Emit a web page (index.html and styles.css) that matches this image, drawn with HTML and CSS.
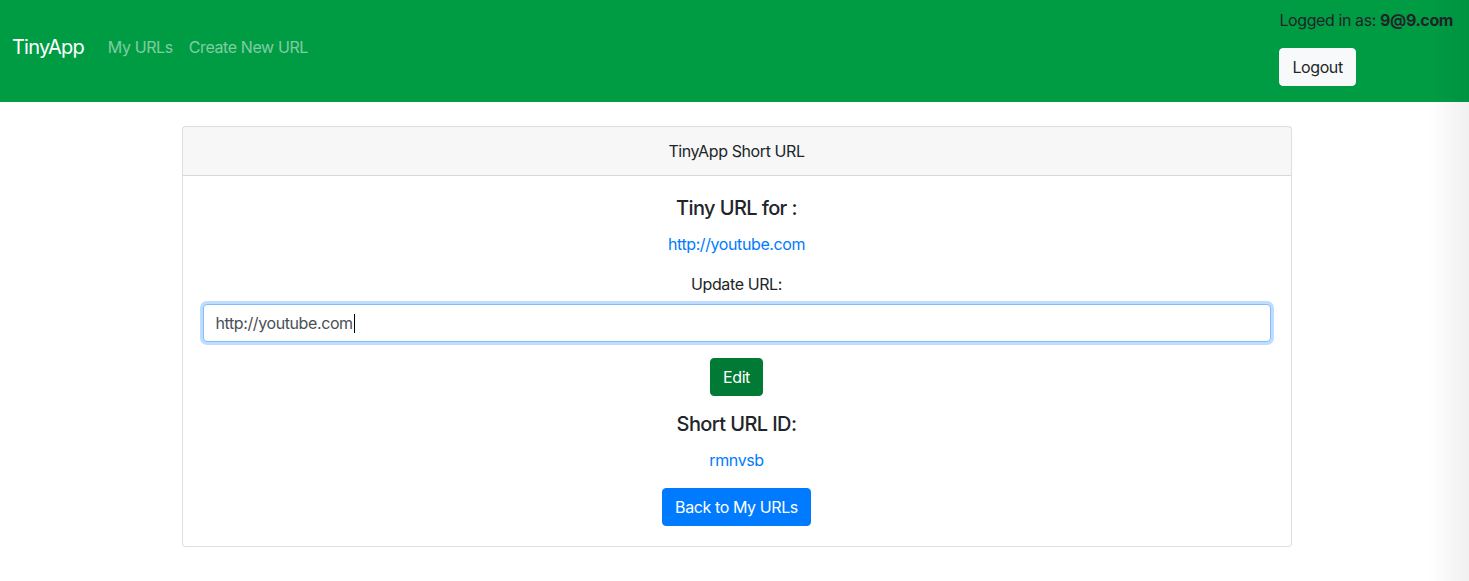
FILE: index.html
```html
<!DOCTYPE html>
<html lang="en">
<head>
<meta charset="utf-8">
<title>TinyApp</title>
<link rel="stylesheet" href="styles.css">
</head>
<body>
<nav class="navbar">
  <a class="brand" href="#">TinyApp</a>
  <ul class="nav-links">
    <li><a class="nav-link" href="#">My URLs</a></li>
    <li><a class="nav-link" href="#">Create New URL</a></li>
  </ul>
  <div class="user-box">
    <div class="user-line">Logged in as: <b>9@9.com</b></div>
    <button class="btn btn-light">Logout</button>
  </div>
</nav>
<main class="container">
  <section class="card">
    <header class="card-header">TinyApp Short URL</header>
    <div class="card-body">
      <h5 class="title">Tiny URL for :</h5>
      <a class="link long-link" href="#">http://youtube.com</a>
      <form class="edit-form">
        <label class="label" for="longURL">Update URL:</label>
        <div class="input"><span>http://youtube.com</span><span class="caret"></span></div>
        <button class="btn btn-edit" type="button">Edit</button>
      </form>
      <h5 class="title">Short URL ID:</h5>
      <a class="link short-link" href="#">rmnvsb</a>
      <a class="btn btn-primary" href="#">Back to My URLs</a>
    </div>
  </section>
</main>
<div class="edge-shadow"></div>
</body>
</html>
```
FILE: styles.css
```css
* { box-sizing: border-box; }
html, body { margin: 0; padding: 0; }
body {
  font-family: Inter, "Noto Sans", "Liberation Sans", sans-serif;
  font-size: 16px;
  line-height: 24px;
  letter-spacing: -0.4px;
  color: #212529;
  background: #fff;
}
a { text-decoration: none; }

.navbar {
  display: flex;
  align-items: flex-start;
  background: #009c44;
  padding: 8px 16px 16px 12px;
  height: 102px;
}
.brand {
  color: #fff;
  font-size: 20px;
  line-height: 30px;
  letter-spacing: -0.8px;
  margin-top: 24px;
  margin-right: 16px;
}
.nav-links {
  display: flex;
  list-style: none;
  margin: 24px 0 0 0;
  padding: 0;
  flex: 1;
}
.nav-link {
  display: block;
  padding: 3px 8px;
  color: rgba(255, 255, 255, 0.5);
}
.user-box {
  display: flex;
  flex-direction: column;
  align-items: flex-start;
}
.user-line { color: #212529; }
.user-line b { font-weight: 700; }

.btn {
  display: inline-block;
  font-family: inherit;
  font-size: 16px;
  line-height: 24px;
  letter-spacing: -0.4px;
  padding: 6px 12px;
  border: 1px solid transparent;
  border-radius: 4px;
  cursor: pointer;
}
.btn-light {
  margin-top: 16px;
  background: #f8f9fa;
  border-color: #f8f9fa;
  color: #212529;
}
.btn-edit {
  background: #007a35;
  border-color: #007a35;
  color: #fff;
}
.btn-primary {
  background: #007bff;
  border-color: #007bff;
  color: #fff;
}

.container {
  width: 1110px;
  margin: 24px auto 0;
  position: relative;
  left: 2px;
}
.card {
  border: 1px solid rgba(0, 0, 0, 0.125);
  border-radius: 4px;
  background: #fff;
}
.card-header {
  background: rgba(0, 0, 0, 0.03);
  border-bottom: 1px solid rgba(0, 0, 0, 0.125);
  padding: 12px 20px;
  text-align: center;
}
.card-body {
  padding: 20px;
  display: flex;
  flex-direction: column;
  align-items: center;
  text-align: center;
}
.title {
  font-size: 20px;
  font-weight: 500;
  line-height: 24px;
  letter-spacing: -0.6px;
  margin: 0;
}
.link { color: #007bff; }
.long-link { margin-top: 12px; }
.short-link { margin-top: 12px; margin-bottom: 16px; }
.edit-form {
  width: 100%;
  display: flex;
  flex-direction: column;
  align-items: center;
  margin: 16px 0;
}
.label { margin-bottom: 8px; }
.input {
  width: 100%;
  height: 38px;
  display: flex;
  align-items: center;
  text-align: left;
  font-size: 16px;
  color: #495057;
  padding: 6px 12px;
  border: 1px solid #80bdff;
  border-radius: 4px;
  box-shadow: 0 0 0 3px rgba(0, 123, 255, 0.25);
  margin-bottom: 16px;
  background: #fff;
}
.caret {
  display: inline-block;
  width: 1px;
  height: 19px;
  background: #000;
  margin-left: 1px;
}
.edge-shadow {
  position: fixed;
  top: 0;
  right: 0;
  width: 40px;
  height: 100%;
  background: linear-gradient(to right, rgba(0, 0, 0, 0), rgba(0, 0, 0, 0.06));
  pointer-events: none;
}
```
